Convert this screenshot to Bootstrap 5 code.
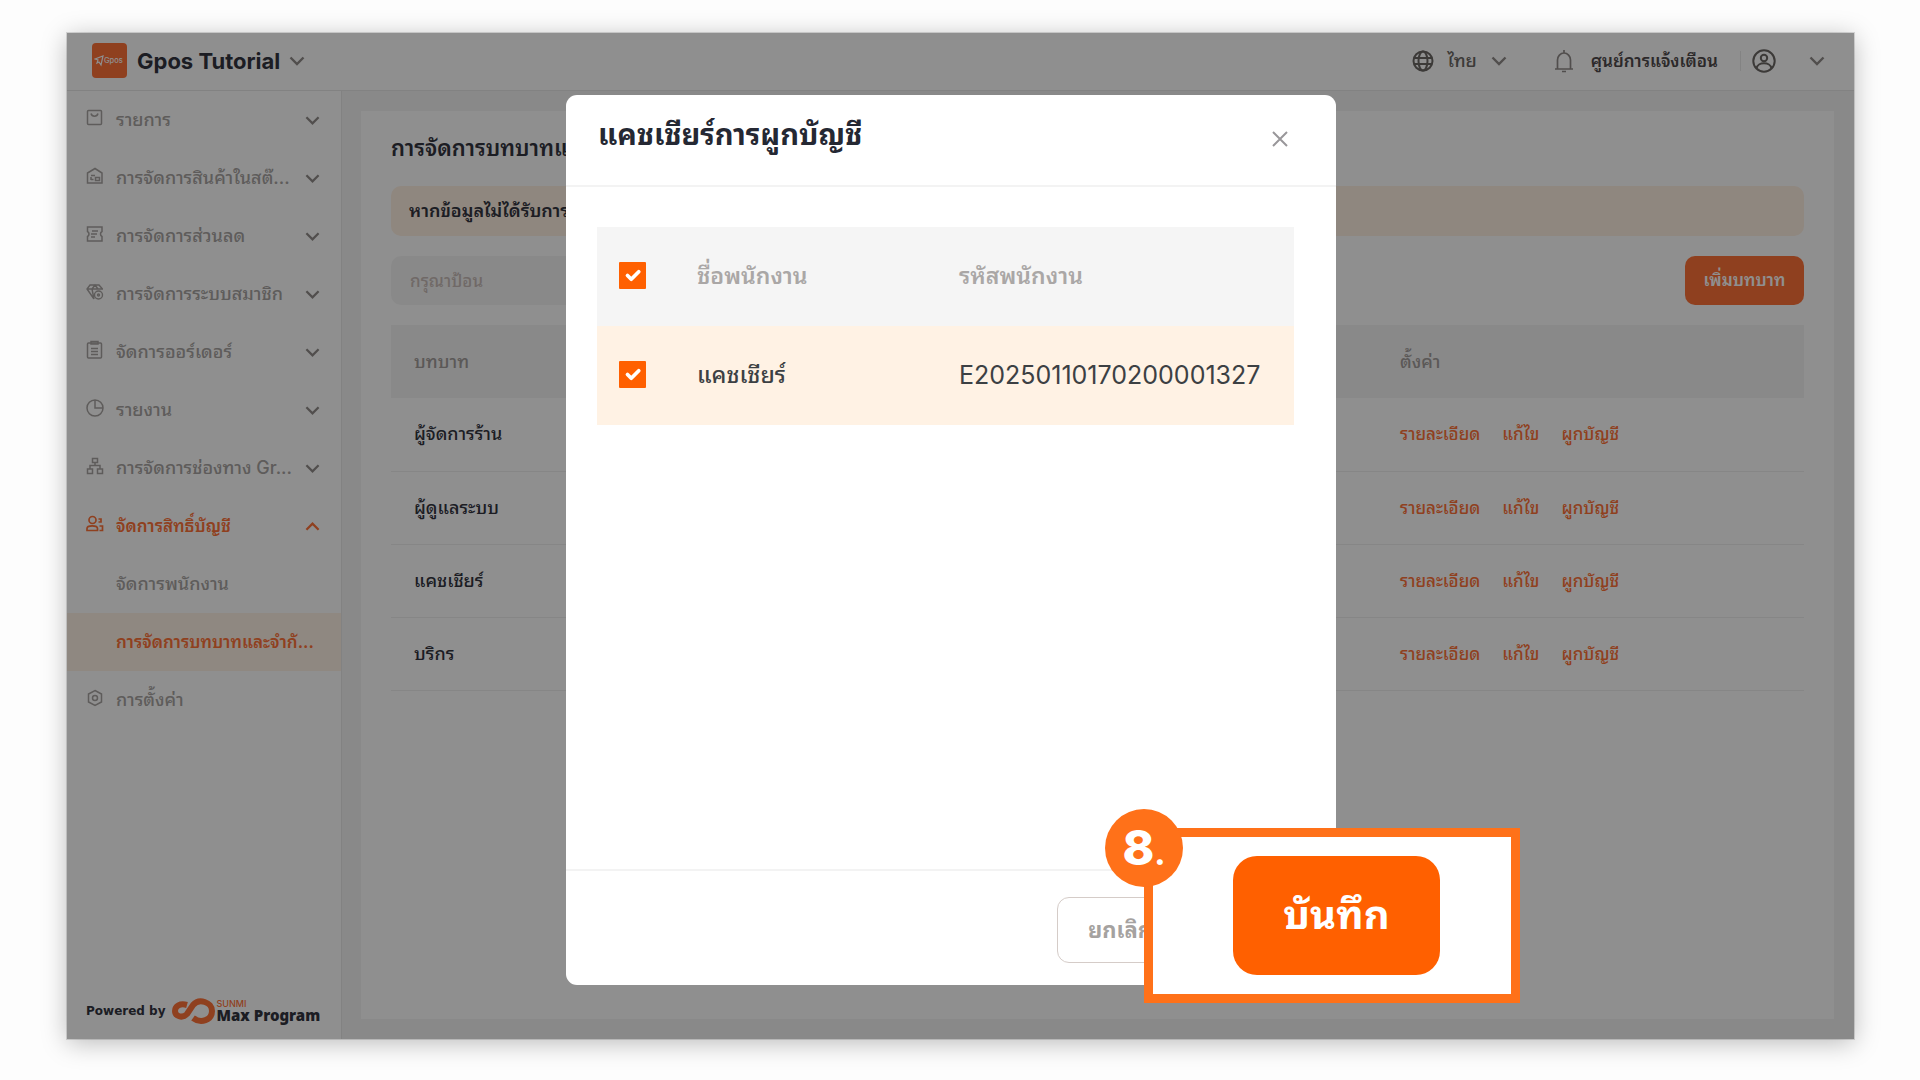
<!DOCTYPE html>
<html lang="th">
<head>
<meta charset="utf-8">
<meta name="viewport" content="width=device-width, initial-scale=1">
<title>Gpos Tutorial</title>
<link href="https://cdn.jsdelivr.net/npm/bootstrap@5.3.0/dist/css/bootstrap.min.css" rel="stylesheet">
<style>
:root{--ink:#33353f;--muted:#a8a4a2;--brand:#ff6000;--brand-soft:#ff7238;--tint:#fff2e6}
body{background:#fdfdfd;font-family:Inter,"Noto Sans Thai Looped",Loma,"Noto Sans",sans-serif;font-size:18px;line-height:24px;color:var(--ink);font-weight:500;min-height:100vh;padding:33px 66px 41px 67px}
svg{display:block;flex:none;fill:none;stroke:currentColor}
a{color:inherit;text-decoration:none}
.app-window{position:relative;flex:1;background:#fff;box-shadow:0 0 0 1px #0002,0 4px 24px #0004}
.topbar{height:58px;border-bottom:1px solid #e8e8e8;padding:0 29px 2px 25px}
.brand-tile{width:35px;height:35px;border-radius:4px;background:var(--brand-soft);color:#fff}
.shop-name{font-size:22px;font-weight:700;margin-left:10px;margin-right:9px}
.chev{color:#918c8a}
.topbar button{background:none;border:0;padding:0;font-weight:inherit;color:#6c6865}
.topbar .lang{gap:14px}
.topbar .alerts{color:#4f4a4c;font-size:17px;font-weight:600;gap:17px;margin-left:47px}
.topbar .alerts svg{color:#918c8a}
.topbar .account{gap:33px;border-left:1px solid #eaeaea;padding-left:11px;margin-left:22px;height:20px}
.side{width:275px;border-right:1px solid #e8e8e8;color:var(--muted);font-weight:500}
.side a{height:58px;padding:0 21px 0 19px}
.side a>svg:first-child{margin-bottom:4px}
.side a span{flex:1;white-space:nowrap;padding-left:12px}
.side a.child{padding-left:37px;padding-right:10px}
.side a.open,.side a.current{color:var(--brand-soft);font-size:17px;font-weight:600}
.side a.current{background:var(--tint)}
.powered{padding:0 19px 15px;color:var(--ink);font:bold 12px/16px "DejaVu Sans",sans-serif}
.powered svg{color:var(--brand-soft);margin:0 2px 0 6px}
.powered .name{font:900 15px/14px "Noto Sans",sans-serif}
.powered .maker{font:500 9px/8px Inter,sans-serif;color:var(--brand-soft);text-transform:uppercase}
.stage{background:#f5f5f5;padding:20px 20px 20px 19px}
.panel{background:#fff;padding:20px 30px}
.panel h1{font-size:22px;line-height:34px;font-weight:600;margin-bottom:21px}
.notice{background:#fff0e2;border-radius:10px;padding:13px 18px;margin-bottom:20px;font-weight:600}
.panel .form-control{background:#f5f5f5;border:0;border-radius:10px;width:300px;height:49px;padding:0 19px;font-size:17px;font-weight:500}
.panel .form-control::placeholder{color:#c8bcb8;opacity:1}
.btn-add{background:var(--brand-soft);color:#fff;border:0;border-radius:10px;width:119px;height:49px;padding:0;font-size:17px;font-weight:600}
.roles{margin-top:20px;width:100%;table-layout:fixed}
.roles th,.roles td{height:73px;padding:0 23px;border-bottom:1px solid #efefef}
.roles th{background:#f4f4f4;color:#a39d9b;font-weight:500;border:0}
.roles th:first-child{width:986px}
.roles a{color:var(--brand-soft);font-size:17px;margin-right:22px}
.shade{position:absolute;inset:0;background:#000;opacity:.44}
.bind-dialog{position:absolute;left:499px;top:62px;width:770px;min-height:890px;background:#fff;border-radius:11px}
.bind-dialog header{height:92px;border-bottom:2px solid #f3f3f3;padding:0 48px 10px 32px}
.bind-dialog h2{font-size:29px;line-height:40px;font-weight:700;margin:0;color:#252833}
.bind-dialog .btn-x{border:0;background:none;padding:8px 0 0;color:#99979a}
.members{margin:40px 42px 0 31px;table-layout:fixed;width:697px;color:#3c4043;font-size:23px}
.members th,.members td{height:99px;padding:0 0 2px}
.members th{background:#f5f5f5;color:#aaa7a6;font-weight:600}
.members td{background:#fff2e4}
.members th:first-child{width:100px;padding-left:22px}
.members td:first-child{padding-left:22px}
.members th:nth-child(2){width:262px}
.members .staff-code{font-size:25px;font-weight:400}
.members .form-check-input{display:block;width:27px;height:27px;margin:0;border:0;border-radius:1px;background-color:var(--brand);background-size:25px}
.bind-dialog footer{height:116px;border-top:2px solid #f3f3f3;padding:26px 153px 24px 0}
.btn-cancel{border:1px solid #d5ccc8;border-radius:12px;background:#fff;color:#a5a2a0;font-size:22px;font-weight:700;width:126px;height:66px;padding:0}
.callout-box{position:absolute;left:1077px;top:795px;width:376px;height:175px;border:9px solid #ff7119;background:#fff;padding-left:9px}
.btn-save{background:var(--brand);color:#fff;border:0;border-radius:24px;width:207px;height:119px;font-size:40px;font-weight:700;padding:0 0 2px}
.step{position:absolute;left:-48px;top:-28px;width:78px;height:78px;border-radius:50%;background:#ff7119;color:#fff;font:800 48px/78px Inter,sans-serif}
.step span{font-size:32px}
</style>
</head>
<body class="d-flex flex-column">
<svg class="d-none" aria-hidden="true">
<symbol id="down" viewBox="0 0 16 16"><path stroke-width="2.400" d="M1.500 4.500 8 11l6.500-6.500"/></symbol>
</svg>
<div class="app-window d-flex flex-column">
<div class="topbar d-flex align-items-center">
<div class="brand-tile d-flex align-items-center justify-content-center"><svg width="31" height="14" viewBox="0 0 31 14"><path d="M1 5 9 2 7 11 5 8 3 9 4 6Z" stroke-width="1.200"/><text x="10" y="9" font-size="7.500" font-weight="500" fill="currentColor" stroke="none">Gpos</text></svg></div>
<div class="shop-name">Gpos Tutorial</div>
<svg class="chev" width="16" height="16"><use href="#down"/></svg>
<button class="lang d-flex align-items-center ms-auto" type="button">
<svg width="22" height="22" viewBox="0 0 22 22" stroke-width="2"><circle cx="11" cy="11" r="9.500"/><ellipse cx="11" cy="11" rx="4.500" ry="9.500"/><path d="M2 8h18M2 14h18"/></svg>
<span>ไทย</span><svg class="chev" width="16" height="16"><use href="#down"/></svg></button>
<button class="alerts d-flex align-items-center" type="button">
<svg width="20" height="24" viewBox="0 0 20 24" stroke-width="1.700"><path d="M1 20h18M3.500 20v-9a6.500 7 0 0 1 13 0v9M10 1v3M8 22.500h4"/></svg><span>ศูนย์การแจ้งเตือน</span></button>
<button class="account d-flex align-items-center" type="button" aria-label="บัญชี">
<svg width="24" height="24" viewBox="0 0 24 24" stroke-width="2"><circle cx="12" cy="12" r="10.700"/><circle cx="12" cy="9" r="3.200"/><path d="M4.500 19.500c1-7 14-7 15 0"/></svg><svg class="chev" width="16" height="16"><use href="#down"/></svg></button>
</div>
<div class="d-flex flex-grow-1">
<nav class="side d-flex flex-column flex-shrink-0">
<a href="#" class="d-flex align-items-center"><svg width="18" height="18" viewBox="0 0 18 18" stroke-width="1.500"><rect x="1.500" y="1.500" width="14" height="14" rx="1"/><path d="M5 4.500c1 3.500 6 3.500 7 0"/></svg><span>รายการ</span><svg class="chev" width="15" height="15"><use href="#down"/></svg></a>
<a href="#" class="d-flex align-items-center"><svg width="18" height="18" viewBox="0 0 18 18" stroke-width="1.500"><path d="M1.500 16V6L9 1.500 16 6v10ZM5 8.500h4M5 12.500h2.500M5 10v3M9.500 10.500h4v3h-4Z"/></svg><span>การจัดการสินค้าในสต๊...</span><svg class="chev" width="15" height="15"><use href="#down"/></svg></a>
<a href="#" class="d-flex align-items-center"><svg width="18" height="18" viewBox="0 0 18 18" stroke-width="1.500"><path d="M1.500 2H16v4.500c-2 1-2 4 0 5V16H1.500v-4.500c2-1 2-4 0-5ZM6 6h6M5 9h6M5 12h4"/></svg><span>การจัดการส่วนลด</span><svg class="chev" width="15" height="15"><use href="#down"/></svg></a>
<a href="#" class="d-flex align-items-center"><svg width="18" height="18" viewBox="0 0 18 18" stroke-width="1.400"><path d="M8 16 1 6l3-4h9l3.500 4M1 6h16M6 6l2 10M6 6l3-4 3 4"/><circle cx="12.500" cy="12" r="4"/><circle cx="12.500" cy="12" r="1"/></svg><span>การจัดการระบบสมาชิก</span><svg class="chev" width="15" height="15"><use href="#down"/></svg></a>
<a href="#" class="d-flex align-items-center"><svg width="18" height="20" viewBox="0 0 18 20" stroke-width="1.500"><rect x="1.500" y="3" width="14" height="15" rx="1"/><path d="M5 4V1.500h7V4ZM5 8.500h7M5 11.500h7M5 14.500h7"/></svg><span>จัดการออร์เดอร์</span><svg class="chev" width="15" height="15"><use href="#down"/></svg></a>
<a href="#" class="d-flex align-items-center"><svg width="18" height="18" viewBox="0 0 18 18" stroke-width="1.500"><circle cx="9" cy="9" r="8"/><path d="M9 1v8h8"/></svg><span>รายงาน</span><svg class="chev" width="15" height="15"><use href="#down"/></svg></a>
<a href="#" class="d-flex align-items-center"><svg width="18" height="18" viewBox="0 0 18 18" stroke-width="1.500"><path d="M6.500 1.500h5v4h-5ZM1.500 12h5v4.500h-5ZM11.500 12h5v4.500h-5ZM9 5.500v3M4 12V8.500h10V12"/></svg><span>การจัดการช่องทาง Gr...</span><svg class="chev" width="15" height="15"><use href="#down"/></svg></a>
<a href="#" class="open d-flex align-items-center"><svg width="18" height="18" viewBox="0 0 18 18" stroke-width="1.700"><circle cx="6.500" cy="5" r="3.500"/><path d="M1 15.500v-2c0-3.500 10.500-3.500 10.500 0v2ZM12.500 4h2.500v3h-2.500M13.500 11h3v4.500h-3"/></svg><span>จัดการสิทธิ์บัญชี</span><svg width="15" height="15" viewBox="0 0 16 16" stroke-width="2.400"><path d="M1.500 11.500 8 5l6.500 6.500"/></svg></a>
<a href="#" class="child d-flex align-items-center"><span>จัดการพนักงาน</span></a>
<a href="#" class="child current d-flex align-items-center"><span>การจัดการบทบาทและจำกั...</span></a>
<a href="#" class="d-flex align-items-center"><svg width="18" height="18" viewBox="0 0 18 18" stroke-width="1.500"><path d="M9 1.500 15.500 5v8L9 16.500 2.500 13V5Z"/><circle cx="9" cy="9" r="2.500"/></svg><span>การตั้งค่า</span></a>
<div class="powered d-flex align-items-center mt-auto"><span>Powered by</span>
<svg width="43" height="26" viewBox="0 0 43 26" stroke-width="6"><path d="M15 7C8 5 3 8 3 13s7 8 12 3l6-9c6-7 19-3 19 6s-11 13-19 7"/></svg>
<div><div class="maker">Sunmi</div><div class="name">Max Program</div></div></div>
</nav>
<main class="stage d-flex flex-grow-1">
<section class="panel flex-grow-1">
<h1>การจัดการบทบาทแ</h1>
<div class="notice">หากข้อมูลไม่ได้รับการ</div>
<div class="d-flex justify-content-between"><input class="form-control" type="text" placeholder="กรุณาป้อน" aria-label="กรุณาป้อน"><button class="btn-add btn" type="button">เพิ่มบทบาท</button></div>
<table class="roles">
<thead><tr><th>บทบาท</th><th>ตั้งค่า</th></tr></thead>
<tbody>
<tr><td>ผู้จัดการร้าน</td><td><a href="#">รายละเอียด</a><a href="#">แก้ไข</a><a href="#">ผูกบัญชี</a></td></tr>
<tr><td>ผู้ดูแลระบบ</td><td><a href="#">รายละเอียด</a><a href="#">แก้ไข</a><a href="#">ผูกบัญชี</a></td></tr>
<tr><td>แคชเชียร์</td><td><a href="#">รายละเอียด</a><a href="#">แก้ไข</a><a href="#">ผูกบัญชี</a></td></tr>
<tr><td>บริกร</td><td><a href="#">รายละเอียด</a><a href="#">แก้ไข</a><a href="#">ผูกบัญชี</a></td></tr>
</tbody></table>
</section>
</main>
</div>
<div class="shade"></div>
<div class="bind-dialog d-flex flex-column" role="dialog" aria-labelledby="bind-title">
<header class="d-flex align-items-center justify-content-between"><h2 id="bind-title">แคชเชียร์การผูกบัญชี</h2><button class="btn-x" type="button" aria-label="ปิด"><svg width="16" height="16" viewBox="0 0 16 16" stroke-width="2"><path d="m1 1 14 14M15 1 1 15"/></svg></button></header>
<table class="members">
<thead><tr><th><input class="form-check-input" type="checkbox" checked aria-label="เลือกทั้งหมด"></th><th>ชื่อพนักงาน</th><th>รหัสพนักงาน</th></tr></thead>
<tbody><tr><td><input class="form-check-input" type="checkbox" checked aria-label="แคชเชียร์"></td><td>แคชเชียร์</td><td class="staff-code">E20250110170200001327</td></tr></tbody>
</table>
<footer class="d-flex justify-content-end mt-auto"><button class="btn-cancel" type="button">ยกเลิก</button></footer>
</div>
<div class="callout-box d-flex align-items-center justify-content-center"><button class="btn-save" type="button">บันทึก</button><div class="step text-center">8<span>.</span></div></div>
</div>
<script src="https://cdn.jsdelivr.net/npm/bootstrap@5.3.0/dist/js/bootstrap.bundle.min.js"></script>
</body>
</html>
